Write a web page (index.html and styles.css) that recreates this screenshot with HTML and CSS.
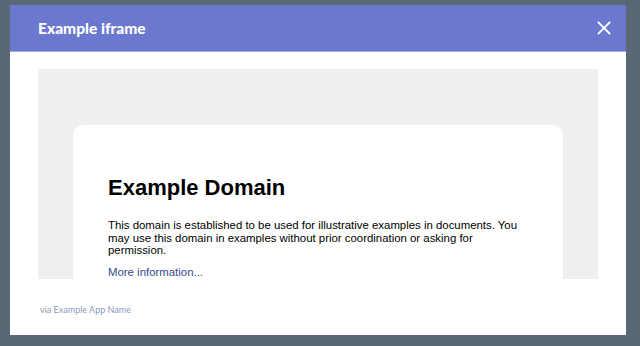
FILE: index.html
```html
<!DOCTYPE html>
<html lang="en">
<head>
  <meta charset="UTF-8">
  <title>Example iframe</title>
  <link rel="stylesheet" href="styles.css">
</head>
<body>
  <div class="modal">
    <div class="modal-header">
      <h2>Example iframe</h2>
      <button class="close-btn" aria-label="Close">
        <svg width="14" height="14" viewBox="0 0 14 14">
          <path d="M1.5 1.5 L12.5 12.5 M12.5 1.5 L1.5 12.5" stroke="#fff" stroke-width="1.8" stroke-linecap="square"/>
        </svg>
      </button>
    </div>

    <div class="modal-body">
      <div class="frame">
        <div class="card">
          <h1>Example Domain</h1>
          <p>This domain is established to be used for illustrative examples in documents. You may use this domain in examples without prior coordination or asking for permission.</p>
          <p><a href="#">More information...</a></p>
        </div>
      </div>
    </div>

    <div class="modal-footer">via Example App Name</div>
  </div>
</body>
</html>
```

FILE: styles.css
```css
* {
  box-sizing: border-box;
}

body {
  margin: 0;
  height: 100vh;
  padding: 5px 0 0 10px;
  background: #5a6776;
  font-family: Lato, "Open Sans", sans-serif;
  overflow: hidden;
}

.modal {
  width: 616px;
  height: 330px;
  background: white;
  display: flex;
  flex-direction: column;
}

.modal-header {
  height: 47px;
  flex-shrink: 0;
  display: flex;
  align-items: center;
  justify-content: space-between;
  padding: 0 15px 0 28px;
  background: #6b78cf;
  border-bottom: 1px solid #a4abe4;
}

.modal-header h2 {
  margin: 0;
  font-size: 15.5px;
  font-weight: 900;
  color: white;
}

.close-btn {
  background: none;
  border: none;
  padding: 0;
  width: 14px;
  height: 14px;
  cursor: pointer;
  display: flex;
}

.modal-body {
  padding: 17px 28px 0 28px;
}

.frame {
  height: 210px;
  background: #efeff1;
  padding: 56px 35px 0 35px;
  overflow: hidden;
}

.card {
  background: white;
  border-radius: 10px;
  padding: 35px 35px 40px 35px;
  font-family: "Liberation Sans", Arial, sans-serif;
  font-size: 11.4px;
  line-height: 12.5px;
  color: #000;
}

.card h1 {
  margin: 16px 0 19px 0;
  font-size: 22px;
  line-height: 24px;
}

.card p {
  margin: 0 0 9px 0;
}

.card a {
  color: #38488f;
  text-decoration: none;
}

.modal-footer {
  padding: 25px 0 0 30px;
  font-size: 9px;
  color: #8a9bbc;
}
```
